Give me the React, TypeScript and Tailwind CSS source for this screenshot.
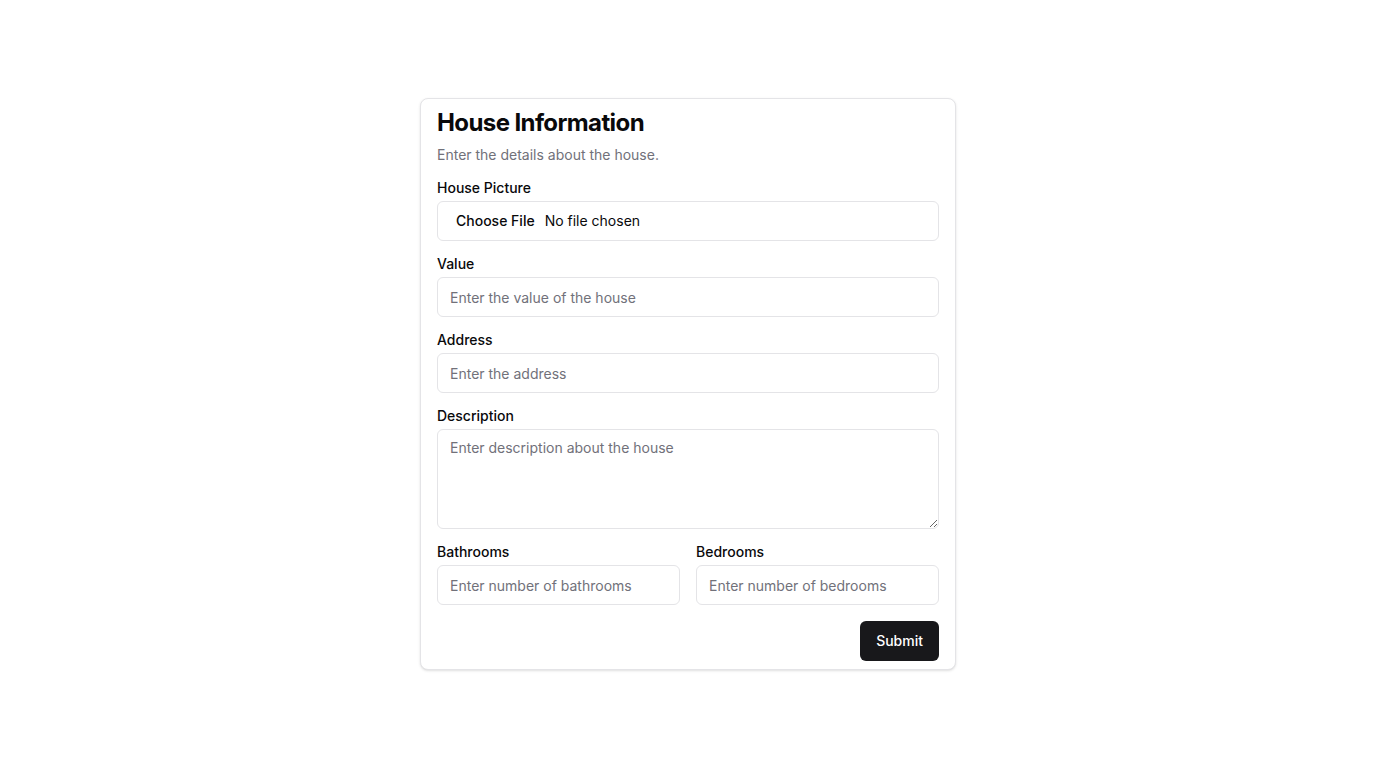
import React from 'react';

const inputClass =
  'h-10 w-full rounded-md border border-[#e4e4e7] bg-white px-3 text-sm text-[#09090b] placeholder:text-[#71717a] outline-none';

const Field: React.FC<{ label: string; children: React.ReactNode }> = ({ label, children }) => (
  <div className="flex flex-col gap-1.5">
    <label className="text-sm font-medium leading-none text-[#09090b]">{label}</label>
    {children}
  </div>
);

const App: React.FC = () => {
  return (
    <div
      className="flex min-h-screen items-center justify-center bg-white"
      style={{ fontFamily: 'Inter, "Noto Sans", sans-serif' }}
    >
      <form
        className="flex w-[536px] flex-col gap-4 rounded-lg border border-[#e4e4e7] bg-white px-4 py-2 shadow-sm"
        onSubmit={(e) => e.preventDefault()}
      >
        <div className="flex flex-col gap-1.5">
          <h1 className="text-2xl leading-8 font-bold tracking-tight text-[#09090b]">House Information</h1>
          <p className="text-sm text-[#71717a]">Enter the details about the house.</p>
        </div>

        <Field label="House Picture">
          <input
            type="file"
            className={`${inputClass} pt-[9px] pb-[7px] file:border-0 file:bg-transparent file:px-1.5 file:text-sm file:font-medium file:text-[#09090b]`}
          />
        </Field>

        <Field label="Value">
          <input className={inputClass} placeholder="Enter the value of the house" />
        </Field>

        <Field label="Address">
          <input className={inputClass} placeholder="Enter the address" />
        </Field>

        <Field label="Description">
          <textarea
            className="h-[100px] w-full rounded-md border border-[#e4e4e7] bg-white px-3 py-2 text-sm text-[#09090b] placeholder:text-[#71717a] outline-none"
            placeholder="Enter description about the house"
          />
        </Field>

        <div className="grid grid-cols-2 gap-4">
          <Field label="Bathrooms">
            <input className={inputClass} placeholder="Enter number of bathrooms" />
          </Field>
          <Field label="Bedrooms">
            <input className={inputClass} placeholder="Enter number of bedrooms" />
          </Field>
        </div>

        <div className="flex justify-end">
          <button
            type="submit"
            className="h-10 rounded-md bg-[#18181b] px-4 text-sm font-medium text-white"
          >
            Submit
          </button>
        </div>
      </form>
    </div>
  );
};

export default App;
